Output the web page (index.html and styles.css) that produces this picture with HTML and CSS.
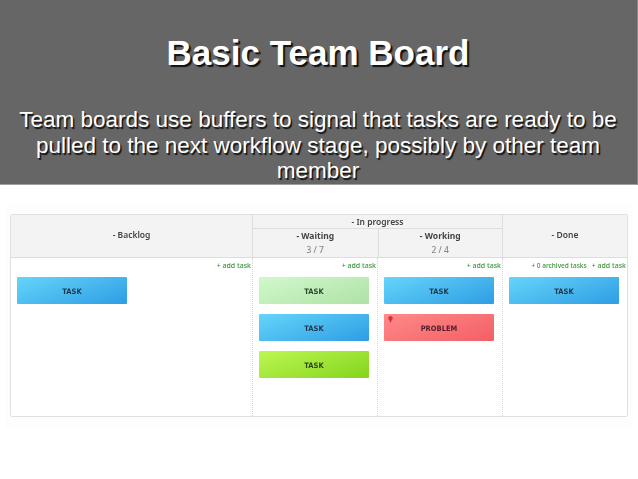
FILE: index.html
```html
<!DOCTYPE html>
<html lang="en">
<head>
<meta charset="utf-8">
<title>Basic Team Board</title>
<link rel="stylesheet" href="styles.css">
</head>
<body>
<header class="banner">
  <h1 class="title">Basic Team Board</h1>
  <p class="lead">Team boards use buffers to signal that tasks are ready to be pulled to the next workflow stage, possibly by other team member</p>
</header>
<main class="sheet">
  <section class="board">
    <div class="head head-backlog">- Backlog</div>
    <div class="head-group">
      <div class="group-title">- In progress</div>
      <div class="group-cols">
        <div class="sub"><span>- Waiting</span><span class="count">3 / 7</span></div>
        <div class="sub sub-right"><span>- Working</span><span class="count">2 / 4</span></div>
      </div>
    </div>
    <div class="head head-done">- Done</div>

    <div class="col">
      <div class="actions"><span>+ add task</span></div>
      <div class="card half blue">TASK</div>
    </div>
    <div class="col dashed">
      <div class="actions"><span>+ add task</span></div>
      <div class="card lightgreen">TASK</div>
      <div class="card blue">TASK</div>
      <div class="card lime">TASK</div>
    </div>
    <div class="col dashed">
      <div class="actions"><span>+ add task</span></div>
      <div class="card blue">TASK</div>
      <div class="card red">
        <svg class="pin" width="5" height="7" viewBox="0 0 5 7"><path d="M2.5 0a2.2 2.2 0 0 1 1.3 4L2.5 7 1.2 4A2.2 2.2 0 0 1 2.5 0z" fill="#dc2c38"/></svg>
        PROBLEM
      </div>
    </div>
    <div class="col dashed">
      <div class="actions"><span class="archived">+ 0 archived tasks</span><span>+ add task</span></div>
      <div class="card blue">TASK</div>
    </div>
  </section>
</main>
</body>
</html>
```
FILE: styles.css
```css
html, body {
  margin: 0;
  padding: 0;
  background: #fff;
}
body {
  width: 638px;
  height: 479px;
  overflow: hidden;
  font-family: "Liberation Sans", Arial, sans-serif;
}
.banner {
  box-sizing: border-box;
  height: 185px;
  padding: 32px 20px 0 19px;
  background: #666;
  border-bottom: 1px solid #a0a0a0;
  border-right: 1px solid #8a8a8a;
  color: #fff;
  text-align: center;
}
.title {
  margin: 0 0 33px;
  font-size: 35px;
  line-height: 42px;
  font-weight: 700;
  text-shadow: 2px 2px 1px #111;
}
.lead {
  margin: 0;
  font-size: 22.5px;
  line-height: 25.5px;
  text-shadow: 1.5px 1.5px 1px #111;
}
.sheet {
  box-sizing: border-box;
  width: 628px;
  height: 223px;
  margin: 20px 0 0 5px;
  padding: 9px 5px 11px;
  background: #fdfdfd;
}
.board {
  box-sizing: border-box;
  height: 203px;
  display: grid;
  grid-template-columns: 241px 125px 125px 1fr;
  grid-template-rows: 43px 1fr;
  border: 1px solid #e0e0e0;
  border-radius: 2px;
  background: #fff;
  font-family: "Noto Sans", sans-serif;
  filter: blur(0.45px);
  color: #444;
}
.head {
  display: flex;
  align-items: center;
  justify-content: center;
  padding-bottom: 4px;
  background: #f3f3f3;
  border-bottom: 1px solid #ddd;
  font-size: 8.5px;
  font-weight: 600;
  box-sizing: border-box;
}
.head-done {
  border-left: 1px solid #ddd;
}
.head-group {
  grid-column: span 2;
  display: flex;
  flex-direction: column;
  background: #f3f3f3;
  border-left: 1px solid #ddd;
  border-bottom: 1px solid #ddd;
  box-sizing: border-box;
}
.group-title {
  height: 14px;
  box-sizing: border-box;
  display: flex;
  align-items: center;
  justify-content: center;
  border-bottom: 1px solid #ddd;
  font-size: 8.5px;
  font-weight: 600;
}
.group-cols {
  flex: 1;
  display: grid;
  grid-template-columns: 1fr 1fr;
}
.sub {
  display: flex;
  flex-direction: column;
  align-items: center;
  justify-content: center;
  font-size: 8.5px;
  font-weight: 700;
  line-height: 14px;
}
.sub-right {
  border-left: 1px solid #ddd;
}
.count {
  color: #888;
  font-weight: 500;
}
.col {
  box-sizing: border-box;
  padding: 0 8px 0 6px;
  display: flex;
  flex-direction: column;
}
.dashed {
  border-left: 1px dotted #d2d2d2;
}
.actions {
  height: 19px;
  margin-right: -8px;
  padding-right: 1px;
  display: flex;
  justify-content: flex-end;
  gap: 5px;
  align-items: center;
  padding-bottom: 5px;
  box-sizing: border-box;
  font-size: 7px;
  font-weight: 500;
  color: #3a963a;
  white-space: nowrap;
}
.archived {
  font-size: 6.5px;
}
.card {
  position: relative;
  box-sizing: border-box;
  height: 27px;
  margin-bottom: 10px;
  padding-top: 2px;
  display: flex;
  align-items: center;
  justify-content: center;
  border-radius: 1px;
  font-family: "DejaVu Sans Condensed", "DejaVu Sans", sans-serif;
  font-size: 7.5px;
  font-weight: 700;
  color: #1f3547;
}
.half {
  width: 110px;
}
.blue {
  background: linear-gradient(160deg, #65d5fa, #2e9de4);
}
.lightgreen {
  background: linear-gradient(160deg, #d2f8cc, #aee2a6);
  color: #284628;
}
.lime {
  background: linear-gradient(160deg, #bdf752, #84d41d);
  color: #2a460e;
}
.red {
  background: linear-gradient(160deg, #ff8a8a, #f35f63);
  color: #55202e;
}
.pin {
  position: absolute;
  left: 4px;
  top: 2px;
}
```
